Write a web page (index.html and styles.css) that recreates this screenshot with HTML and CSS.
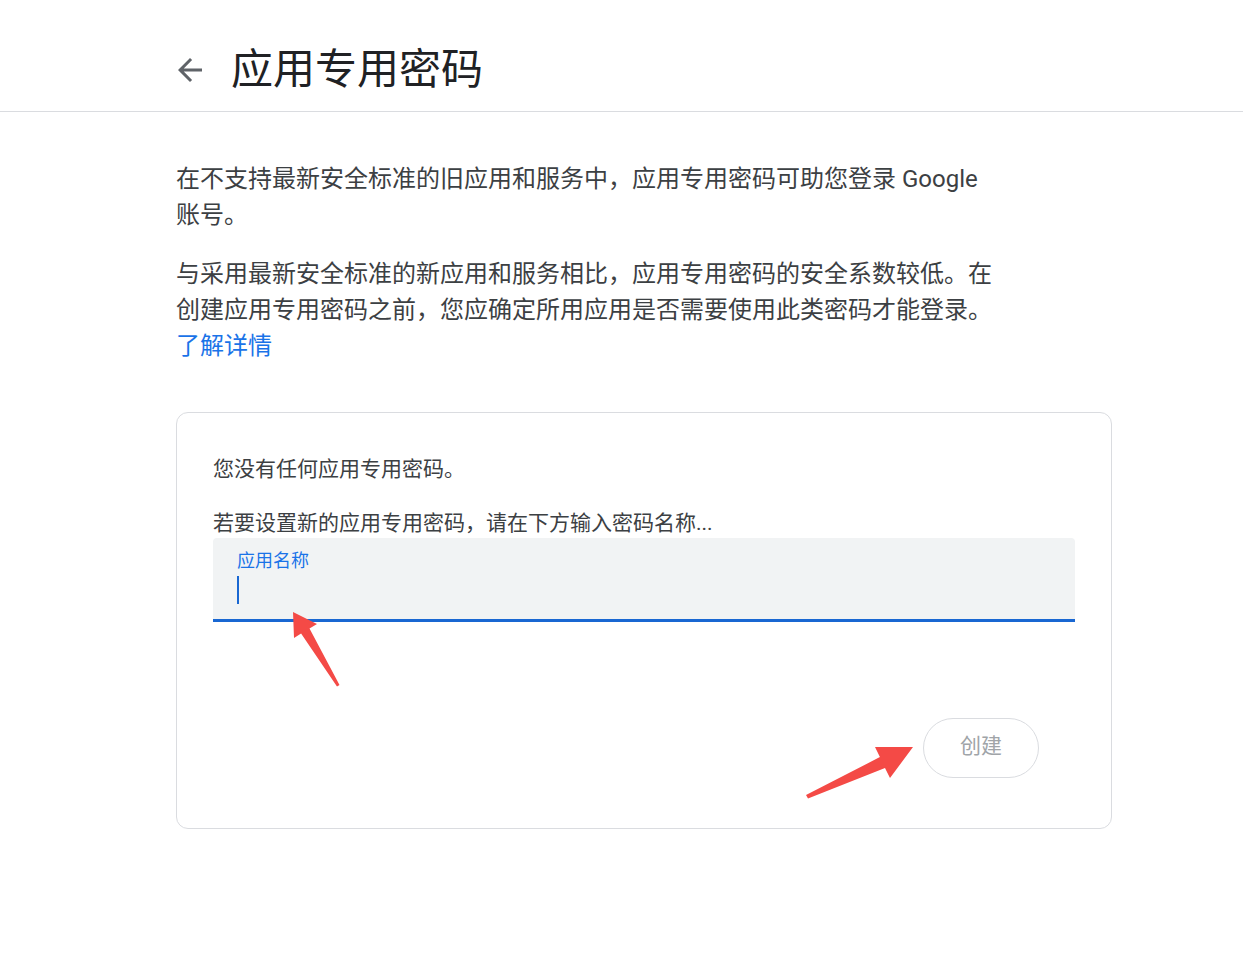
FILE: index.html
```html
<!DOCTYPE html>
<html lang="zh-CN">
<head>
  <meta charset="UTF-8">
  <meta name="viewport" content="width=device-width, initial-scale=1.0">
  <title>应用专用密码</title>
  <link rel="stylesheet" href="styles.css">
</head>
<body>
  <header class="topbar">
    <button class="back" aria-label="返回">
      <svg viewBox="0 0 24 24" width="36" height="36"><path d="M20 11H7.83l5.59-5.59L12 4l-8 8 8 8 1.41-1.41L7.83 13H20v-2z"/></svg>
    </button>
    <h1>应用专用密码</h1>
  </header>

  <main class="content">
    <p class="intro">在不支持最新安全标准的旧应用和服务中，应用专用密码可助您登录 Google 账号。</p>
    <p class="intro last">与采用最新安全标准的新应用和服务相比，应用专用密码的安全系数较低。在创建应用专用密码之前，您应确定所用应用是否需要使用此类密码才能登录。<br><a href="#">了解详情</a></p>

    <section class="card">
      <p class="card-text">您没有任何应用专用密码。</p>
      <p class="card-text hint">若要设置新的应用专用密码，请在下方输入密码名称...</p>
      <div class="field">
        <label>应用名称</label>
        <span class="cursor"></span>
      </div>
      <div class="actions">
        <button class="create" disabled>创建</button>
      </div>
    </section>
  </main>

  <svg class="marks" width="1243" height="968" viewBox="0 0 1243 968">
    <polygon points="293,612 317,624 309.5,628.5 339.5,685 337,686.5 301.1,633.5 294,638"/>
    <polygon points="913,747 890,778 885,768 808,798.5 806,795 879.9,757.1 875,747"/>
  </svg>
</body>
</html>
```

FILE: styles.css
```css
body { margin: 0; background: #fff; font-family: Roboto, "Noto Sans CJK SC", sans-serif; color: #3c4043; }
.topbar { display: flex; align-items: center; height: 48px; padding: 46px 0 17px 172px; border-bottom: 1px solid #dadce0; }
.back { width: 36px; height: 36px; padding: 0; border: 0; background: none; fill: #5f6368; cursor: pointer; }
.back svg { display: block; }
.topbar h1 { margin: 0 0 0 23px; font-size: 42px; font-weight: 400; line-height: 48px; color: #202124; }

.content { width: 936px; padding: 49px 0 0 176px; }
.intro { max-width: 822px; margin: 0 0 23px; font-size: 24px; line-height: 36px; }
.intro.last { margin-bottom: 0; }
.intro a { color: #1a73e8; text-decoration: none; }

.card { margin-top: 48px; padding: 41px 36px 50px 36px; border: 1px solid #dadce0; border-radius: 12px; }
.card-text { margin: 0; font-size: 21px; line-height: 30px; }
.card-text.hint { margin-top: 24px; }
.field { margin-top: 0; height: 70px; padding: 11px 0 0 24px; background: #f1f3f4; border-radius: 4px 4px 0 0; border-bottom: 3px solid #1967d2; }
.field label { display: block; font-size: 18px; line-height: 24px; color: #1a73e8; }
.cursor { display: block; width: 2px; height: 28px; margin-top: 3px; background: #1967d2; }

.actions { display: flex; justify-content: flex-end; margin-top: 96px; padding-right: 36px; }
.create { width: 116px; height: 60px; padding: 0 0 5px; border: 1px solid #dadce0; border-radius: 30px; background: #fff; font-family: inherit; font-size: 21px; line-height: 30px; color: #a0a4a8; }

.marks { position: absolute; top: 0; left: 0; pointer-events: none; fill: #f44a46; }
```
